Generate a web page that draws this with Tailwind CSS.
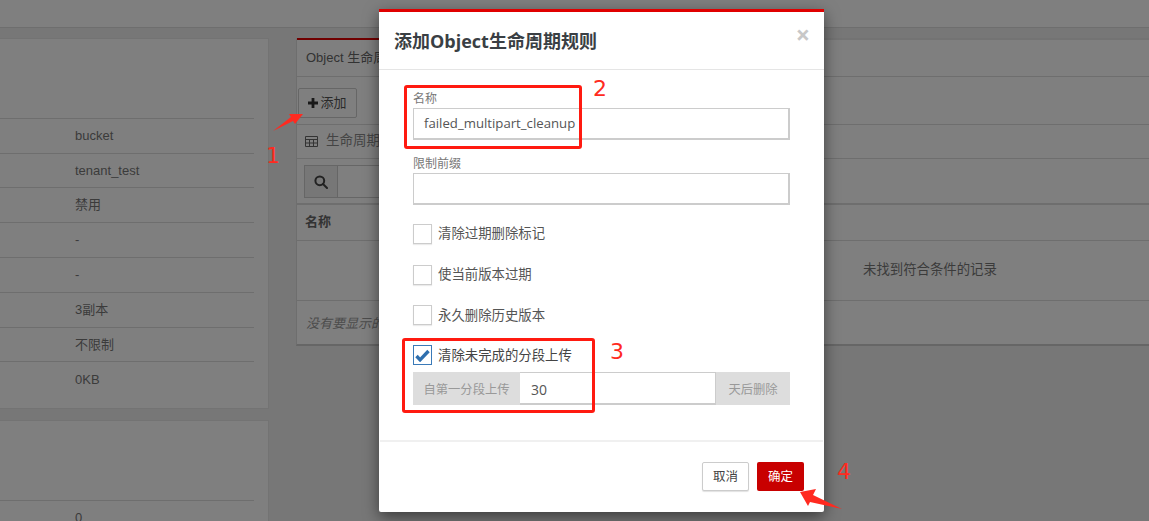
<!DOCTYPE html>
<html lang="zh">
<head>
<meta charset="utf-8">
<script src="https://cdn.jsdelivr.net/npm/@tailwindcss/browser@4"></script>
<title>添加Object生命周期规则</title>
</head>
<body class="m-0 h-[521px] w-[1149px] overflow-hidden bg-[#eeeeee] font-['Open_Sans','Noto_Sans_CJK_SC',sans-serif] text-[#777777]">
<div class="relative h-[521px] w-[1149px] overflow-hidden">
  <!-- page behind the dialog -->
  <header class="h-[28px] border-b border-[#dddddd] bg-white"></header>
  <main class="flex gap-[27px] pt-[10px]">
    <div class="flex w-[269px] flex-col gap-[11px] font-['Liberation_Sans','Noto_Sans_CJK_SC',sans-serif]">
      <section class="h-[371px] border border-l-0 border-[#e7e7e7] bg-white pt-[79px] pr-[14px] text-[13px]">
        <div class="flex h-[35px] items-center border-t border-[#dddddd] pl-[75px]">bucket</div>
        <div class="flex h-[34px] items-center border-t border-[#dddddd] pl-[75px]">tenant_test</div>
        <div class="flex h-[35px] items-center border-t border-[#dddddd] pl-[75px]">禁用</div>
        <div class="flex h-[35px] items-center border-t border-[#dddddd] pl-[75px]">-</div>
        <div class="flex h-[35px] items-center border-t border-[#dddddd] pl-[75px]">-</div>
        <div class="flex h-[35px] items-center border-t border-[#dddddd] pl-[75px]">3副本</div>
        <div class="flex h-[34px] items-center border-t border-[#dddddd] pl-[75px]">不限制</div>
        <div class="flex h-[36px] items-center border-t border-[#dddddd] pl-[75px]">0KB</div>
      </section>
      <section class="h-[102px] border border-l-0 border-[#e7e7e7] bg-white pt-[79px] pr-[14px] text-[13px]">
        <div class="flex h-[35px] items-center border-t border-[#dddddd] pl-[75px]">0</div>
      </section>
    </div>
    <section class="h-[308px] flex-1 border-t-2 border-b-2 border-t-[#e7e7e7] border-b-[#cccccc] border-l border-l-[#dddddd] bg-white font-['Liberation_Sans','Noto_Sans_CJK_SC',sans-serif] text-[13px]">
      <div class="-mt-[2px] flex h-[38px] w-[140px] items-center border-t-2 border-[#e00000] pl-[9px] text-[#666666]">Object 生命周期规则</div>
      <div class="border-t border-[#dddddd]"></div>
      <div class="h-[47px] pl-[1px] pt-[11px]">
        <button class="flex h-[30px] w-[59px] items-center justify-center gap-[2px] rounded-[2px] border border-[#cccccc] bg-white text-[13px] text-[#555555]">
          <svg width="10" height="10" viewBox="0 0 10 10"><path d="M3.6 0h2.8v3.6H10v2.8H6.4V10H3.6V6.4H0V3.6h3.6z" fill="#333333"/></svg>添加
        </button>
      </div>
      <div class="flex h-[34px] items-center gap-[8px] border-t border-[#dddddd] pl-[8px] text-[13.5px] text-[#888888]">
        <svg width="13" height="11" viewBox="0 0 13 11" fill="none" stroke="#666666"><path d="M.5.5h12v10H.5zM.5 3.5h12M.5 7h12M4.5 3.5v7M8.5 3.5v7"/></svg>
        生命周期规则
      </div>
      <div class="h-[45px] border-t border-[#dddddd] pl-[7px] pt-[6px]">
        <div class="flex h-[33px] w-[400px] border border-[#cccccc]">
          <span class="flex w-[33px] items-center justify-center border-r border-[#cccccc] bg-[#eeeeee]">
            <svg width="14" height="14" viewBox="0 0 14 14" fill="none" stroke="#444444" stroke-width="2"><circle cx="5.8" cy="5.8" r="4.4"/><path d="M9 9l4 4" stroke-linecap="round"/></svg>
          </span>
        </div>
      </div>
      <div class="flex h-[37px] items-center border-t-2 border-[#dddddd] pl-[8px] pb-[2px] text-[13px] font-bold text-[#666666]">名称</div>
      <div class="flex h-[60px] items-center border-t border-[#dddddd] pl-[566px] text-[13.4px]">未找到符合条件的记录</div>
      <div class="flex h-[46px] items-center border-t border-[#dddddd] pl-[9px] text-[13px] text-[#999999] italic">没有要显示的记录</div>
    </section>
  </main>

  <!-- backdrop -->
  <div class="absolute inset-0 bg-black/50"></div>

  <!-- dialog -->
  <div role="dialog" class="absolute top-[9px] left-[379px] flex h-[503px] w-[445px] flex-col rounded-b-[2px] border-t-[3px] border-[#e00000] bg-white shadow-[0_5px_15px_rgba(0,0,0,0.5)]">
    <div class="flex h-[58px] items-start justify-between border-b border-[#e5e5e5] pr-[14px] pl-[15px]">
      <h2 class="mt-[16px] text-[18px] leading-[26px] font-bold text-[#3a3f44]">添加Object生命周期规则</h2>
      <span class="mt-[8px] text-[25px] leading-[28px] font-bold text-[#c8c8c8]">×</span>
    </div>
    <form class="px-[34px]">
      <label class="mt-[21px] block h-[17px] text-[12px] leading-[16px] text-[#777777]">名称</label>
      <div class="flex h-[32px] items-center border-2 border-t border-l border-[#cccccc] pl-[10px] text-[13.2px] text-[#555555]">failed_multipart_cleanup</div>
      <label class="mt-[16px] block h-[17px] text-[12px] leading-[16px] text-[#777777]">限制前缀</label>
      <div class="h-[32px] border-2 border-t border-l border-[#cccccc]"></div>
      <div class="mt-[19px] flex h-[20px] items-center gap-[6px] text-[13.4px] text-[#555555]"><span class="h-[20px] w-[19px] border border-[#cccccc] shadow-[0_1px_1px_rgba(0,0,0,0.08)]"></span><span class="-mt-[2px]">清除过期删除标记</span></div>
      <div class="mt-[21px] flex h-[20px] items-center gap-[6px] text-[13.4px] text-[#555555]"><span class="h-[20px] w-[19px] border border-[#cccccc] shadow-[0_1px_1px_rgba(0,0,0,0.08)]"></span><span class="-mt-[2px]">使当前版本过期</span></div>
      <div class="mt-[20px] flex h-[20px] items-center gap-[6px] text-[13.4px] text-[#555555]"><span class="h-[20px] w-[19px] border border-[#cccccc] shadow-[0_1px_1px_rgba(0,0,0,0.08)]"></span>永久删除历史版本</div>
      <div class="mt-[20px] flex h-[20px] items-center gap-[6px] text-[13.4px] text-[#444444]">
        <span class="flex h-[20px] w-[19px] items-center justify-center border border-[#3a7ab8]">
          <svg width="15" height="13" viewBox="0 0 15 13"><path d="M1.5 7l3.6 3.8L13.5 2" fill="none" stroke="#2f6fae" stroke-width="3.4"/></svg>
        </span><span>清除未完成的分段上传</span>
      </div>
      <div class="mt-[7px] flex h-[33px] text-[12.3px] text-[#999999]">
        <span class="flex w-[107px] items-center justify-center bg-[#dddddd] pt-[3px]">自第一分段上传</span>
        <span class="flex flex-1 items-center border-b-2 border-t border-[#cccccc] pt-[2px] pl-[11px] text-[14px] text-[#555555]">30</span>
        <span class="flex w-[75px] items-center justify-center border-l border-[#cccccc] bg-[#dddddd] pt-[3px]">天后删除</span>
      </div>
    </form>
    <div class="mx-[1px] mt-[35px] flex flex-1 items-start justify-end gap-[8px] border-t-2 border-[#f0f0f0] pt-[20px] pr-[19px]">
      <button class="h-[29px] w-[47px] rounded-[2px] border border-[#cccccc] bg-white pt-[2px] text-[12.5px] text-[#444444] shadow-[0_1px_1px_rgba(0,0,0,0.12)]">取消</button>
      <button class="h-[29px] w-[47px] rounded-[2px] bg-[#c80000] pt-[2px] text-[12.5px] text-white">确定</button>
    </div>
  </div>

  <!-- screenshot annotations -->
  <div class="absolute top-[85px] left-[404px] h-[64px] w-[178px] rounded-[3px] border-[3px] border-[#ff1a10]"></div>
  <div class="absolute top-[338px] left-[402px] h-[75px] w-[193px] rounded-[3px] border-[3px] border-[#ff1a10]"></div>
  <span class="absolute top-[141px] left-[266px] font-['DejaVu_Sans',sans-serif] text-[22px] leading-[30px] text-[#ff2a20]">1</span>
  <span class="absolute top-[74px] left-[593px] font-['DejaVu_Sans',sans-serif] text-[22px] leading-[30px] text-[#ff2a20]">2</span>
  <span class="absolute top-[337px] left-[610px] font-['DejaVu_Sans',sans-serif] text-[22px] leading-[30px] text-[#ff2a20]">3</span>
  <span class="absolute top-[457px] left-[837px] font-['DejaVu_Sans',sans-serif] text-[22px] leading-[30px] text-[#ff2a20]">4</span>
  <svg class="absolute inset-0" width="1149" height="521" viewBox="0 0 1149 521">
    <path d="M273 131L291 117L289 114L303 114L295 124L293 121Z" fill="#ff2a20"/>
    <path d="M800 492L816 489L813 495L842 509L810 502L808 506Z" fill="#ff2a20"/>
  </svg>
</div>
</body>
</html>
